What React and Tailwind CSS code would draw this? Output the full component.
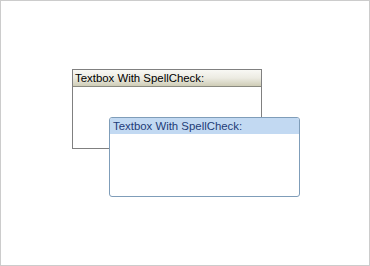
export default function App() {
  return (
    <div className="relative w-[370px] h-[266px] border border-[#cccccc] bg-white font-['Liberation_Sans',Arial,sans-serif]">
      {/* Default skin */}
      <div className="ml-[71px] mt-[68px] w-[190px] h-[80px] border border-[#808080] bg-white">
        <div className="h-[17px] border-b border-[#8a8a80] bg-gradient-to-b from-[#f8f8f4] via-[#ecebe2] to-[#cfcdb6] pl-[2px] text-[11.4px] leading-[17px] text-black">
          Textbox With SpellCheck:
        </div>
      </div>

      {/* Focused / blue skin */}
      <div className="absolute left-[108px] top-[116px] w-[191px] h-[80px] rounded-[3px] border border-[#7f9db9] bg-white overflow-hidden">
        <div className="h-[16px] bg-[#c2d9f2] pl-[3px] text-[11.4px] leading-[16px] text-[#1e3c78]">
          Textbox With SpellCheck:
        </div>
      </div>
    </div>
  );
}
